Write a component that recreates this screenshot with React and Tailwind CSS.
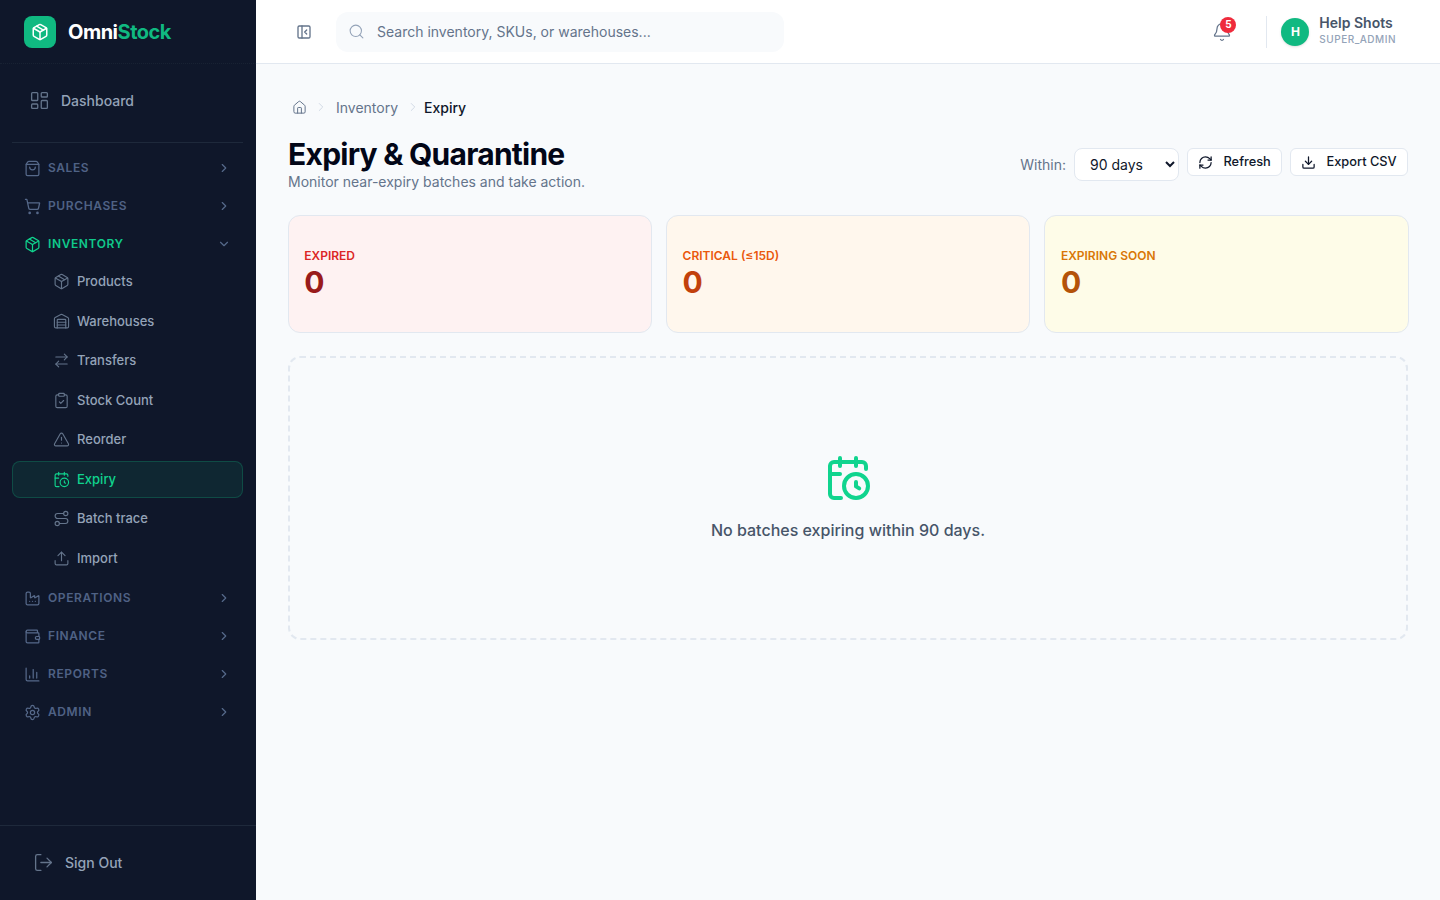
import React from "react";
import { Package, LayoutDashboard, ShoppingBag, ShoppingCart, Warehouse, ArrowRightLeft, ClipboardCheck, TriangleAlert, CalendarClock, Route, Upload, Factory, Wallet, ChartColumn, Settings, LogOut, PanelLeftClose, Search, Bell, RefreshCw, Download, House, ChevronRight, ChevronDown } from "lucide-react";

function Section({ icon: Icon, label, active }) {
  return (
    <div className="h-[38px] flex items-center pl-[24px] pr-[25px]">
      <Icon size={17} strokeWidth={1.75} className={active ? "text-[#10d48e]" : "text-[#56698a]"} />
      <span className={"ml-[7px] text-[12px] font-semibold tracking-[0.6px] " + (active ? "text-[#10c98a]" : "text-[#4f6285]")}>{label}</span>
      <span className="ml-auto">
        {active ? <ChevronDown size={14} className="text-[#56698a]" /> : <ChevronRight size={14} className="text-[#56698a]" />}
      </span>
    </div>
  );
}

function Sub({ icon: Icon, label, active }) {
  return (
    <div className={"h-[37.5px] ml-[12px] mr-[13px] flex items-center pl-[40px] rounded-[8px] border " + (active ? "bg-[#10b981]/10 border-[#10b981]/25" : "border-transparent")}>
      <Icon size={17} strokeWidth={1.6} className={active ? "text-[#10d48e]" : "text-[#64748b]"} />
      <span className={"ml-[7px] text-[13px] font-medium " + (active ? "text-[#10d48e]" : "text-[#94a3b8]")}>{label}</span>
    </div>
  );
}

function Stat({ label, bg, labelColor, numColor }) {
  return (
    <div className={"h-[118px] rounded-[12px] border border-[#e2e8f0] flex flex-col justify-center pl-[15.75px] pr-[16px] " + bg}>
      <div className={"text-[12px] font-semibold leading-[16px] " + labelColor}>{label}</div>
      <div className={"text-[30px] font-bold leading-[36px] mb-[1px] " + numColor}>0</div>
    </div>
  );
}

export default function App() {
  return (
    <div className="flex h-[900px] w-[1440px] overflow-hidden bg-[#f8fafc] font-['Inter',sans-serif]">
      <aside className="w-[256px] shrink-0 bg-[#0f172a] flex flex-col">
        <div className="h-[64px] flex items-center pl-[24px] border-b border-dotted border-[#1e293b]/60">
          <div className="w-[32px] h-[32px] rounded-[8px] bg-[#10b981] flex items-center justify-center">
            <Package size={18} className="text-white" />
          </div>
          <span className="ml-[12px] text-[20px] font-bold tracking-[-0.5px] text-white">Omni<span className="text-[#10b981]">Stock</span></span>
        </div>
        <div className="h-[79px] ml-[12px] mr-[13px] border-b border-[#1e293b] flex items-center pl-[16.5px] pb-[6px]">
          <LayoutDashboard size={21} strokeWidth={1.5} className="text-[#64748b]" />
          <span className="ml-[11.5px] text-[14px] font-medium text-[#94a3b8]">Dashboard</span>
        </div>
        <div className="flex-1 pt-[6px]">
          <Section icon={ShoppingBag} label="SALES" />
          <Section icon={ShoppingCart} label="PURCHASES" />
          <Section icon={Package} label="INVENTORY" active />
          <div className="flex flex-col gap-[2px]">
            <Sub icon={Package} label="Products" />
            <Sub icon={Warehouse} label="Warehouses" />
            <Sub icon={ArrowRightLeft} label="Transfers" />
            <Sub icon={ClipboardCheck} label="Stock Count" />
            <Sub icon={TriangleAlert} label="Reorder" />
            <Sub icon={CalendarClock} label="Expiry" active />
            <Sub icon={Route} label="Batch trace" />
            <Sub icon={Upload} label="Import" />
          </div>
          <div className="mt-[2px]">
            <Section icon={Factory} label="OPERATIONS" />
            <Section icon={Wallet} label="FINANCE" />
            <Section icon={ChartColumn} label="REPORTS" />
            <Section icon={Settings} label="ADMIN" />
          </div>
        </div>
        <div className="h-[75px] border-t border-[#1e293b] flex items-center pl-[32.5px] pb-[2px]">
          <LogOut size={21} strokeWidth={1.5} className="text-[#64748b]" />
          <span className="ml-[11.5px] text-[14px] font-medium text-[#94a3b8]">Sign Out</span>
        </div>
      </aside>

      <div className="flex-1 flex flex-col min-w-0">
        <header className="h-[64px] bg-white border-b border-[#e2e8f0] flex items-center pl-[40px] pr-[44px]">
          <PanelLeftClose size={16} strokeWidth={2} className="text-[#64748b]" />
          <div className="ml-[24px] w-[448px] h-[40px] rounded-[12px] bg-[#f8fafc] flex items-center pl-[11.5px]">
            <Search size={17} strokeWidth={1.5} className="text-[#94a3b8]" />
            <span className="ml-[12.5px] text-[14px] text-[#64748b]">Search inventory, SKUs, or warehouses...</span>
          </div>
          <div className="ml-auto flex items-center">
            <div className="relative w-[20px] h-[20px] mr-[34px]">
              <Bell size={20} strokeWidth={1.5} className="text-[#64748b]" />
              <span className="absolute -top-[5px] left-[8px] w-[16px] h-[16px] rounded-full bg-[#ef2b3c] text-white text-[10px] font-bold flex items-center justify-center">5</span>
            </div>
            <div className="w-px h-[32px] bg-[#e2e8f0] mr-[14px]" />
            <div className="w-[28px] h-[28px] rounded-full bg-[#10b981] text-white text-[12px] font-bold flex items-center justify-center shadow-sm">H</div>
            <div className="ml-[10px] flex flex-col mb-[4px]">
              <span className="text-[14px] font-semibold leading-[18px] text-[#475569]">Help Shots</span>
              <span className="text-[10px] font-medium leading-[14px] tracking-[0.5px] text-[#94a3b8]">SUPER_ADMIN</span>
            </div>
          </div>
        </header>

        <main className="flex-1 px-[32px] pt-[32px]">
          <nav className="h-[22px] flex items-center text-[14px]">
            <House size={15} strokeWidth={1.6} className="text-[#64748b] ml-[3.5px]" />
            <ChevronRight size={14} strokeWidth={1.5} className="text-[#cbd5e1] ml-[7.5px]" />
            <span className="ml-[8px] text-[#64748b]">Inventory</span>
            <ChevronRight size={14} strokeWidth={1.5} className="text-[#cbd5e1] ml-[8px]" />
            <span className="ml-[4px] text-[#0f172a] font-medium">Expiry</span>
          </nav>
          <div className="mt-[16px] flex items-start justify-between">
            <div>
              <h1 className="text-[30px] font-bold leading-[40px] tracking-[-0.75px] text-[#020617]">Expiry &amp; Quarantine</h1>
              <p className="text-[14px] leading-[16px] text-[#64748b]">Monitor near-expiry batches and take action.</p>
            </div>
            <div className="flex items-start mt-[14px]">
              <span className="text-[14px] text-[#64748b] mt-[6px] mr-[8px]">Within:</span>
              <select className="w-[105px] h-[33px] rounded-[8px] border border-[#e2e8f0] bg-white pl-[11px] text-[14px] text-[#0f172a]">
                <option>90 days</option>
              </select>
              <button className="ml-[8px] h-[28px] w-[95px] rounded-[6px] border border-[#e2e8f0] bg-white flex items-center pl-[10px] text-[12.8px] font-medium text-[#0f172a]">
                <RefreshCw size={15} strokeWidth={2} className="text-[#0f172a]" />
                <span className="ml-[10.5px]">Refresh</span>
              </button>
              <button className="ml-[8px] h-[28px] w-[118px] rounded-[6px] border border-[#e2e8f0] bg-white flex items-center pl-[10px] text-[12.8px] font-medium text-[#0f172a]">
                <Download size={15} strokeWidth={2} className="text-[#0f172a]" />
                <span className="ml-[10.5px]">Export CSV</span>
              </button>
            </div>
          </div>
          <div className="mt-[25px] -mx-[0.5px] grid grid-cols-3 gap-[14px]">
            <Stat label="EXPIRED" bg="bg-[#fef2f2]" labelColor="text-[#dc2626]" numColor="text-[#991b1b]" />
            <Stat label="CRITICAL (≤15D)" bg="bg-[#fff7ed]" labelColor="text-[#ea580c]" numColor="text-[#c2410c]" />
            <Stat label="EXPIRING SOON" bg="bg-[#fefce8]" labelColor="text-[#d97706]" numColor="text-[#b45309]" />
          </div>
          <div className="mt-[23px] h-[284px] rounded-[12px] border-2 border-dashed border-[#e2e8f0] flex flex-col items-center justify-center">
            <CalendarClock size={48} strokeWidth={2} className="text-[#10d48e] -mt-[1px]" />
            <p className="mt-[16px] text-[16px] font-medium text-[#475569]">No batches expiring within 90 days.</p>
          </div>
        </main>
      </div>
    </div>
  );
}
